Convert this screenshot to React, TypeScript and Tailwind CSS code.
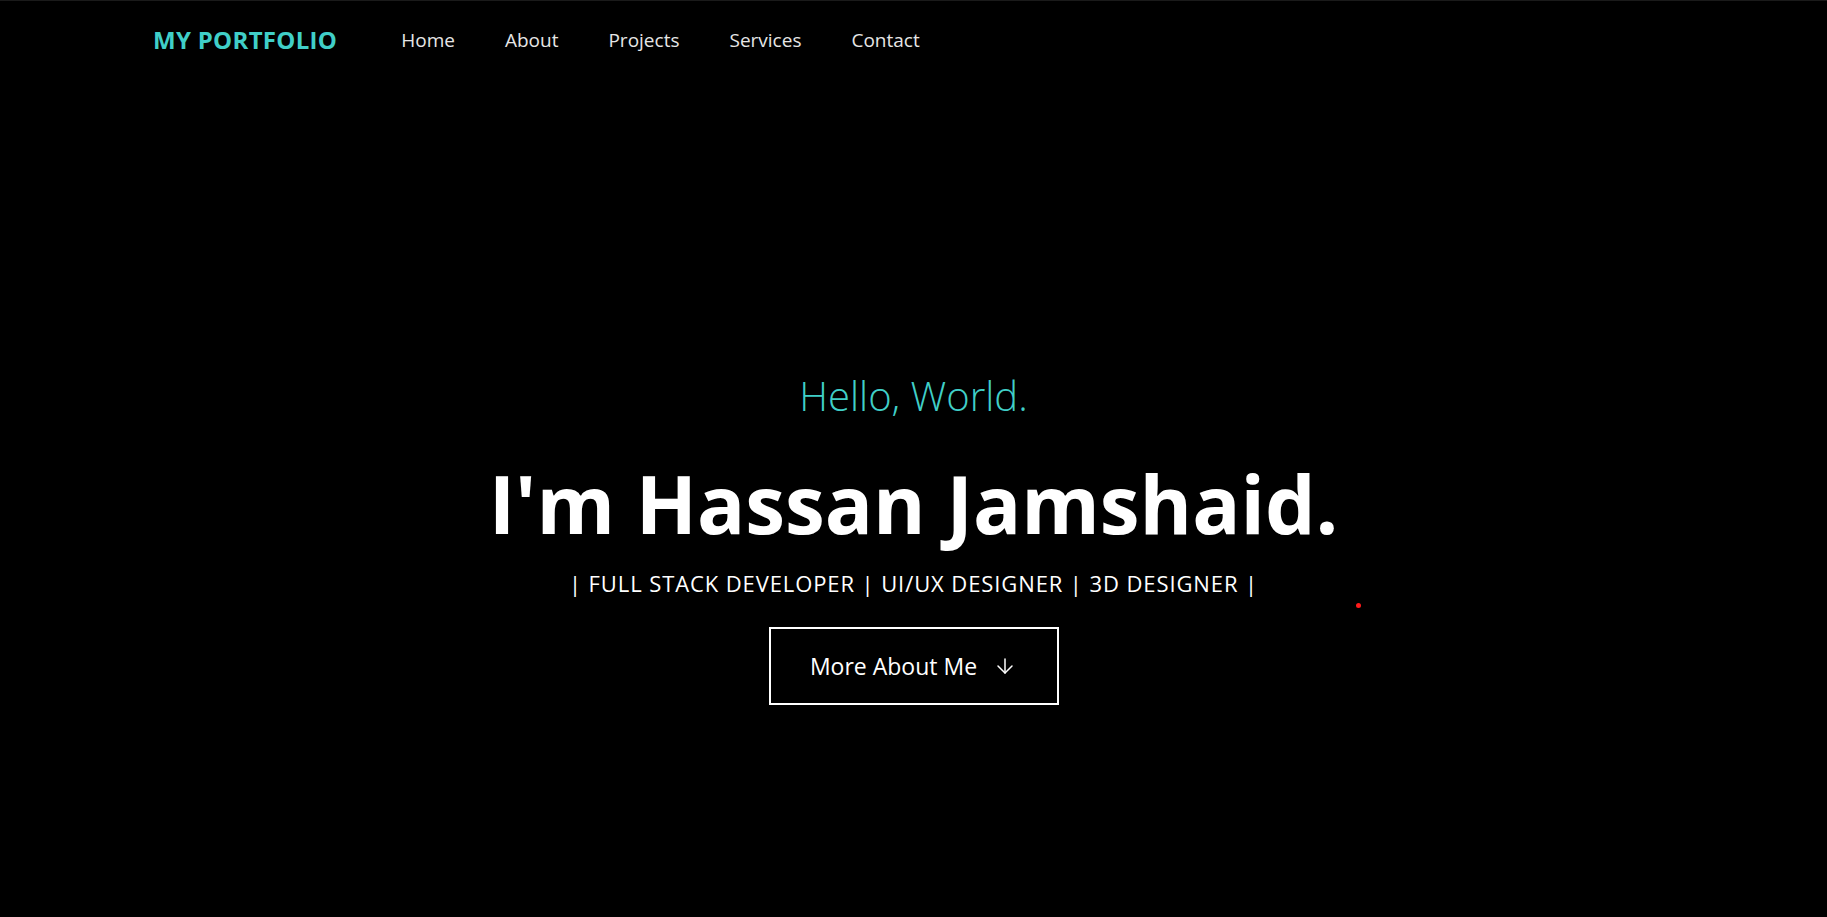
import React from 'react';
import { ArrowDown } from 'lucide-react';

const links = ['Home', 'About', 'Projects', 'Services', 'Contact'];

export default function App() {
  return (
    <div className="min-h-screen h-[917px] bg-black border-t border-[#1a1a1a] text-white font-['Open_Sans',sans-serif] relative overflow-hidden">
      <header className="h-[78px] flex items-center pl-[153px]">
        <a className="text-[24px] font-bold text-[#40cfc8] tracking-[0.3px] leading-none">MY PORTFOLIO</a>
        <nav className="flex items-center gap-[50px] ml-[64px]">
          {links.map(l => (
            <a key={l} className="text-[19px] text-[#e6e6e6] leading-none">{l}</a>
          ))}
        </nav>
      </header>

      {/* Hero */}
      <section className="flex flex-col items-center pt-[293px]">
        <p className="text-[40px] font-light text-[#40cfc8] leading-[48px]">Hello, World.</p>
        <h1 className="text-[80px] font-bold leading-[96px] mt-[35px]">I'm Hassan Jamshaid.</h1>
        <p className="text-[22px] tracking-[0.9px] leading-[30px] mt-[17px]">| FULL STACK DEVELOPER | UI/UX DESIGNER | 3D DESIGNER |</p>
        <button className="mt-[29px] w-[290px] h-[78px] border-2 border-white flex items-center justify-center gap-[16px] text-[23px]">
          More About Me
          <ArrowDown size={24} strokeWidth={1.5} />
        </button>
      </section>

      <span className="absolute left-[1356px] top-[602px] w-[5px] h-[5px] rounded-full bg-[#ff1a1a]" />
    </div>
  );
}
